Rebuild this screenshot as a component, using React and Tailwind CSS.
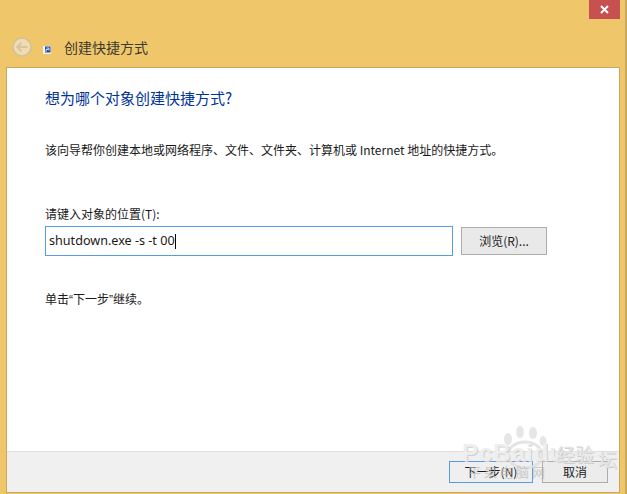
const cjk = { fontFamily: '"Noto Sans CJK SC", "Liberation Sans", sans-serif' };
const latin = { fontFamily: '"Liberation Sans", sans-serif' };

function Paw() {
  return (
    <svg width="56" height="50" viewBox="0 0 56 50" className="absolute left-[498px] top-[425px]" opacity="0.85">
      <ellipse cx="10" cy="14" rx="4" ry="6" fill="#e2e2e2" />
      <ellipse cx="22" cy="7" rx="4" ry="6" fill="#e2e2e2" />
      <ellipse cx="35" cy="8" rx="4" ry="6" fill="#e2e2e2" />
      <ellipse cx="45" cy="16" rx="3.500" ry="5" fill="#e2e2e2" />
      <ellipse cx="27" cy="30" rx="17" ry="13" fill="none" stroke="#e0e0e0" strokeWidth="3" />
    </svg>
  );
}

export default function App() {
  return (
    <div className="relative w-[627px] h-[494px] overflow-hidden bg-[#efc76a] flex flex-col border-r-2 border-[#c9a95d] text-[12px] text-[#1a1a1a]" style={cjk}>
      <div className="flex justify-end pr-[5px] h-[19px]">
        <div className="w-[31px] h-[19px] bg-[#c75050] flex items-center justify-center">
          <svg width="9" height="9" viewBox="0 0 9 9" stroke="#fff" strokeWidth="2" fill="none"><path d="M1 1l7 7M8 1l-7 7" /></svg>
        </div>
      </div>
      <div className="h-[48px] pl-[12px] pt-[18px] flex items-start">
        <svg width="20" height="20" viewBox="0 0 20 20">
          <circle cx="10" cy="10" r="9" fill="#f0dcb0" stroke="#d3c09a" strokeWidth="1.500" />
          <path d="M15.500 10H5.500M9.500 5.800L5 10l4.500 4.200" fill="none" stroke="#d9c5a0" strokeWidth="2" />
        </svg>
        <svg width="8" height="8" viewBox="0 0 8 8" className="ml-[11px] mt-[9px]">
          <rect width="8" height="8" fill="#f4f4f4" />
          <rect x="2" y="0.500" width="5.500" height="6" fill="#1f4aa8" />
          <path d="M3 6V3.500h2.500M3.500 2h2.500v2.500" stroke="#fff" fill="none" strokeWidth="0.8" />
        </svg>
        <span className="ml-[13px] text-[14px] leading-[20px] text-[#3d3a30]">创建快捷方式</span>
      </div>
      <div className="ml-[6px] mr-[5px] h-[426px] border border-[#c9a95d] flex flex-col bg-white">
        <div className="flex-1 pl-[38px] flex flex-col">
          <div className="mt-[19px] text-[15px] leading-[22px] text-[#003399]">想为哪个对象创建快捷方式?</div>
          <div className="mt-[32px] leading-[18px]">该向导帮你创建本地或网络程序、文件、文件夹、计算机或 Internet 地址的快捷方式。</div>
          <div className="mt-[46px] leading-[18px]">请键入对象的位置(T):</div>
          <div className="mt-[3px] flex items-center">
            <div className="w-[408px] h-[30px] border border-[#569de5] pl-[3px] flex items-center text-[12.600px]" style={{ fontFamily: '"Noto Sans", "Noto Sans CJK SC", sans-serif' }}>
              shutdown.exe -s -t 00<span className="w-px h-[15px] bg-black" />
            </div>
            <div className="ml-[8px] w-[86px] h-[28px] border border-[#acacac] bg-[#e9e9e9] flex items-center justify-center">浏览(R)...</div>
          </div>
          <div className="mt-[34px] leading-[18px]">单击<span style={latin}>“</span>下一步<span style={latin}>”</span>继续。</div>
        </div>
        <div className="h-[41px] border-t border-[#dfdfdf] bg-[#f0f0f0] flex justify-end pt-[9px] pr-[11px]">
          <div className="w-[84px] h-[22px] border border-[#569de5] bg-[#efefef] flex items-center justify-center">下一步(N)</div>
          <div className="ml-[9px] w-[66px] h-[22px] border border-[#acacac] bg-[#ececec] flex items-center justify-center">取消</div>
        </div>
      </div>
      <Paw />
      <div className="absolute left-[462px] top-[440px] text-[24px] leading-[26px] font-bold tracking-[1px] text-[#eeeeee] [text-shadow:1px_1px_0_#cfcfcf]" style={latin}>PcBaidu</div>
      <div className="absolute left-[556px] top-[442px] text-[19px] leading-[24px] text-[#e6e6e6] [text-shadow:1px_1px_0_#cfcfcf]">经验</div>
      <div className="absolute left-[598px] top-[447px] text-[19px] leading-[24px] text-[#e6e6e6] [text-shadow:1px_1px_0_#cfcfcf]">坛</div>
      <div className="absolute left-[468px] top-[464px] text-[13px] leading-[16px] tracking-[3px] text-[#b9b9b9] opacity-70">平果电脑网</div>
    </div>
  );
}
